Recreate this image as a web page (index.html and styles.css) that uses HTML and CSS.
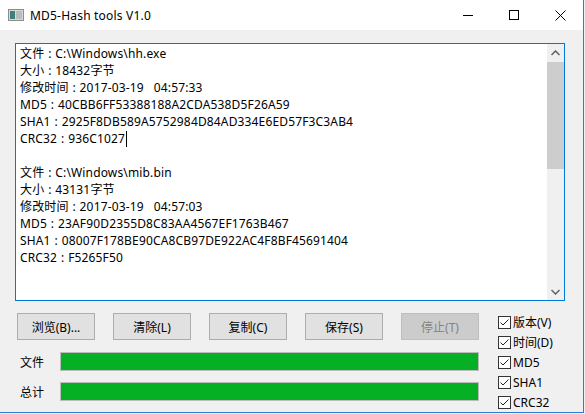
FILE: index.html
```html
<!DOCTYPE html>
<html lang="zh-CN">
<head>
<meta charset="utf-8">
<title>MD5-Hash tools V1.0</title>
<link rel="stylesheet" href="styles.css">
</head>
<body>
<div class="window">
  <div class="titlebar">
    <svg class="app-icon" width="16" height="12" viewBox="0 0 16 12">
      <rect x="0.5" y="0.5" width="15" height="11" fill="#d9d9d9" stroke="#8c8c8c"/>
      <rect x="2" y="2" width="5" height="8" fill="#3f7f7c"/>
      <rect x="8" y="2" width="6" height="8" fill="#b8bcbc"/>
    </svg>
    <span class="title">MD5-Hash tools V1.0</span>
    <div class="controls">
      <span class="ctl"><svg width="11" height="11" viewBox="0 0 11 11"><path d="M0 5.5H10" stroke="#000" stroke-width="1"/></svg></span>
      <span class="ctl"><svg width="11" height="11" viewBox="0 0 11 11"><rect x="0.5" y="0.5" width="9" height="9" fill="none" stroke="#000"/></svg></span>
      <span class="ctl"><svg width="11" height="11" viewBox="0 0 11 11"><path d="M0.5 0.5L10.5 10.5M10.5 0.5L0.5 10.5" stroke="#000" stroke-width="1"/></svg></span>
    </div>
  </div>
  <div class="client">
    <div class="output">
      <div class="output-text">
        <div>文件<span class="colon">:</span>C:\Windows\hh.exe</div>
        <div>大小<span class="colon">:</span>18432字节</div>
        <div>修改时间<span class="colon">:</span>2017-03-19<span class="gap"></span>04:57:33</div>
        <div>MD5<span class="colon">:</span>40CBB6FF53388188A2CDA538D5F26A59</div>
        <div>SHA1<span class="colon">:</span>2925F8DB589A5752984D84AD334E6ED57F3C3AB4</div>
        <div>CRC32<span class="colon">:</span>936C1027<span class="caret"></span></div>
        <div>&nbsp;</div>
        <div>文件<span class="colon">:</span>C:\Windows\mib.bin</div>
        <div>大小<span class="colon">:</span>43131字节</div>
        <div>修改时间<span class="colon">:</span>2017-03-19<span class="gap"></span>04:57:03</div>
        <div>MD5<span class="colon">:</span>23AF90D2355D8C83AA4567EF1763B467</div>
        <div>SHA1<span class="colon">:</span>08007F178BE90CA8CB97DE922AC4F8BF45691404</div>
        <div>CRC32<span class="colon">:</span>F5265F50</div>
      </div>
      <div class="scrollbar">
        <div class="sb-arrow"><svg width="9" height="6" viewBox="0 0 9 6"><path d="M0.5 5L4.5 1L8.5 5" fill="none" stroke="#606060" stroke-width="1.5"/></svg></div>
        <div class="sb-track"><div class="sb-thumb"></div></div>
        <div class="sb-arrow"><svg width="9" height="6" viewBox="0 0 9 6"><path d="M0.5 1L4.5 5L8.5 1" fill="none" stroke="#606060" stroke-width="1.5"/></svg></div>
      </div>
    </div>
    <div class="bottom">
      <div class="left">
        <div class="buttons">
          <button class="btn">浏览(B)...</button>
          <button class="btn">清除(L)</button>
          <button class="btn">复制(C)</button>
          <button class="btn">保存(S)</button>
          <button class="btn disabled">停止(T)</button>
        </div>
        <div class="progress-row">
          <span class="plabel">文件</span>
          <div class="bar"><div class="fill" style="width:100%"></div></div>
        </div>
        <div class="progress-row">
          <span class="plabel">总计</span>
          <div class="bar"><div class="fill" style="width:100%"></div></div>
        </div>
      </div>
      <div class="checks">
        <div class="check"><span class="box"><svg width="11" height="11" viewBox="0 0 11 11"><path d="M1.5 5.5L4 8L9.5 2.5" fill="none" stroke="#222" stroke-width="1"/></svg></span><span>版本(V)</span></div>
        <div class="check"><span class="box"><svg width="11" height="11" viewBox="0 0 11 11"><path d="M1.5 5.5L4 8L9.5 2.5" fill="none" stroke="#222" stroke-width="1"/></svg></span><span>时间(D)</span></div>
        <div class="check"><span class="box"><svg width="11" height="11" viewBox="0 0 11 11"><path d="M1.5 5.5L4 8L9.5 2.5" fill="none" stroke="#222" stroke-width="1"/></svg></span><span>MD5</span></div>
        <div class="check"><span class="box"><svg width="11" height="11" viewBox="0 0 11 11"><path d="M1.5 5.5L4 8L9.5 2.5" fill="none" stroke="#222" stroke-width="1"/></svg></span><span>SHA1</span></div>
        <div class="check"><span class="box"><svg width="11" height="11" viewBox="0 0 11 11"><path d="M1.5 5.5L4 8L9.5 2.5" fill="none" stroke="#222" stroke-width="1"/></svg></span><span>CRC32</span></div>
      </div>
    </div>
  </div>
</div>
</body>
</html>
```

FILE: styles.css
```css
html, body {
  margin: 0;
  padding: 0;
  background: #f0f0f0;
}

body {
  font-family: "Noto Sans", "Noto Sans CJK SC", sans-serif;
  font-size: 12px;
  color: #000;
}

.window {
  box-sizing: border-box;
  width: 584px;
  height: 413px;
  background: #f0f0f0;
  border-right: 1px solid #2a7ed0;
  border-bottom: 1px solid #2a7ed0;
  display: flex;
  flex-direction: column;
  overflow: hidden;
}

.titlebar {
  height: 30px;
  flex: none;
  background: #fff;
  display: flex;
  align-items: center;
}

.app-icon {
  margin-left: 8px;
  display: block;
}

.title {
  margin-left: 6px;
  font-size: 12px;
  letter-spacing: 0.2px;
  color: #000;
}

.controls {
  margin-left: auto;
  display: flex;
  height: 30px;
}

.ctl {
  width: 46px;
  height: 30px;
  display: flex;
  align-items: center;
  justify-content: center;
}

.ctl svg {
  display: block;
}

.client {
  flex: 1;
  display: flex;
  flex-direction: column;
}

.output {
  box-sizing: border-box;
  margin: 13px 0 0 15px;
  width: 550px;
  height: 258px;
  border: 1px solid #0078d7;
  background: #fff;
  display: flex;
}

.output-text {
  flex: 1;
  padding: 1px 0 0 4px;
  line-height: 17px;
  letter-spacing: 0.15px;
  white-space: nowrap;
  overflow: hidden;
}

.colon {
  display: inline-block;
  width: 11px;
  text-align: center;
  letter-spacing: 0;
}

.gap {
  display: inline-block;
  width: 10px;
}

.caret {
  display: inline-block;
  width: 0;
  height: 16px;
  border-left: 1px solid #000;
  vertical-align: -4px;
  margin-left: 1px;
}

.scrollbar {
  width: 17px;
  flex: none;
  background: #f0f0f0;
  display: flex;
  flex-direction: column;
}

.sb-arrow {
  height: 17px;
  flex: none;
  display: flex;
  align-items: center;
  justify-content: center;
}

.sb-arrow svg {
  display: block;
}

.sb-track {
  flex: 1;
}

.sb-thumb {
  height: 107px;
  margin-top: 1px;
  background: #cdcdcd;
}

.bottom {
  display: flex;
  margin-top: 12px;
}

.left {
  padding-left: 17px;
  width: 462px;
}

.buttons {
  display: flex;
  gap: 18px;
}

.btn {
  box-sizing: border-box;
  width: 78px;
  height: 27px;
  margin: 0;
  padding: 0;
  background: #e1e1e1;
  border: 1px solid #adadad;
  font-family: "Noto Sans", "Noto Sans CJK SC", sans-serif;
  font-size: 12px;
  color: #000;
}

.btn.disabled {
  background: #cccccc;
  border-color: #bfbfbf;
  color: #838383;
}

.progress-row {
  display: flex;
  align-items: center;
  margin-top: 12px;
}

.progress-row + .progress-row {
  margin-top: 11px;
}

.plabel {
  margin-left: 3px;
  width: 40px;
}

.bar {
  box-sizing: border-box;
  width: 420px;
  height: 19px;
  border: 1px solid #bcbcbc;
  background: #e6e6e6;
}

.fill {
  height: 100%;
  background: #06b025;
}

.checks {
  margin-left: 19px;
  margin-top: -1px;
  display: flex;
  flex-direction: column;
}

.check {
  height: 20px;
  display: flex;
  align-items: center;
  gap: 2px;
}

.box {
  box-sizing: border-box;
  width: 13px;
  height: 13px;
  border: 1px solid #333;
  background: #fff;
  display: flex;
  align-items: center;
  justify-content: center;
}

.box svg {
  display: block;
}
```
